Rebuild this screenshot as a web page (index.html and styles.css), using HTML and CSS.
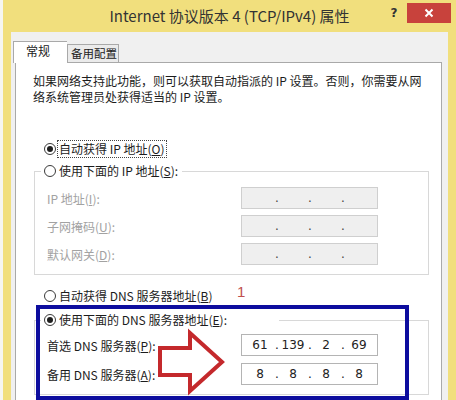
FILE: index.html
```html
<!DOCTYPE html>
<html lang="zh-CN">
<head>
<meta charset="utf-8">
<title>Internet 协议版本 4 (TCP/IPv4) 属性</title>
<link rel="stylesheet" href="styles.css">
</head>
<body>
<div class="frame">
  <div class="titlebar">
    <div class="title">Internet 协议版本 4 (TCP/IPv4) 属性</div>
    <div class="help">?</div>
    <div class="close">
      <svg width="10" height="10" viewBox="0 0 10 10"><path d="M1.5 1.5 L8.5 8.5 M8.5 1.5 L1.5 8.5" stroke="#fff" stroke-width="2"/></svg>
    </div>
  </div>
  <div class="client">
    <div class="tabs">
      <div class="tab active">常规</div>
      <div class="tab">备用配置</div>
    </div>
    <div class="panel">
      <p class="intro">如果网络支持此功能，则可以获取自动指派的 IP 设置。否则，你需要从网<br>络系统管理员处获得适当的 IP 设置。</p>

      <div class="radio-row first">
        <span class="radio checked"></span>
        <span class="label focus">自动获得 IP 地址(<u>O</u>)</span>
      </div>

      <fieldset class="group">
        <legend class="radio-row">
          <span class="radio"></span>
          <span class="label">使用下面的 IP 地址(<u>S</u>):</span>
        </legend>
        <div class="grid ip">
          <span class="field-label disabled">IP 地址(<u>I</u>):</span>
          <div class="ipbox disabled"><span></span><i>.</i><span></span><i>.</i><span></span><i>.</i><span></span></div>
          <span class="field-label disabled">子网掩码(<u>U</u>):</span>
          <div class="ipbox disabled"><span></span><i>.</i><span></span><i>.</i><span></span><i>.</i><span></span></div>
          <span class="field-label disabled">默认网关(<u>D</u>):</span>
          <div class="ipbox disabled"><span></span><i>.</i><span></span><i>.</i><span></span><i>.</i><span></span></div>
        </div>
      </fieldset>

      <div class="radio-row dns-auto">
        <span class="radio"></span>
        <span class="label">自动获得 DNS 服务器地址(<u>B</u>)</span>
      </div>

      <fieldset class="group dns">
        <legend class="radio-row">
          <span class="radio checked"></span>
          <span class="label">使用下面的 DNS 服务器地址(<u>E</u>):</span>
        </legend>
        <div class="grid dnsgrid">
          <span class="field-label">首选 DNS 服务器(<u>P</u>):</span>
          <div class="ipbox"><span>61</span><i>.</i><span>139</span><i>.</i><span>2</span><i>.</i><span>69</span></div>
          <span class="field-label">备用 DNS 服务器(<u>A</u>):</span>
          <div class="ipbox"><span>8</span><i>.</i><span>8</span><i>.</i><span>8</span><i>.</i><span>8</span></div>
        </div>
      </fieldset>
    </div>
  </div>
</div>

<div class="mark-num">1</div>
<div class="mark-box"></div>
<svg class="mark-arrow" width="72" height="68" viewBox="156 328 72 68">
  <path d="M160 348 L190 348 L190 333 L222 362 L190 391 L190 375 L160 375 Z" fill="none" stroke="#c4292c" stroke-width="4" stroke-linejoin="miter"/>
</svg>
</body>
</html>
```

FILE: styles.css
```css
* { box-sizing: border-box; }

html, body {
  margin: 0;
  padding: 0;
}

body {
  width: 456px;
  height: 400px;
  overflow: hidden;
  position: relative;
  background: #f6f6f2;
  font-family: "Noto Sans CJK SC", "Noto Sans", sans-serif;
  font-size: 12px;
  color: #1c1c1c;
}

.frame {
  margin-left: 3px;
  height: 400px;
  background: #f1df7d;
  display: flex;
  flex-direction: column;
}

.titlebar {
  height: 32px;
  flex: none;
  display: flex;
  align-items: flex-start;
}

.title {
  flex: 1;
  padding-left: 72px;
  text-align: center;
  font-size: 15px;
  line-height: 32px;
  color: #333;
  white-space: nowrap;
}

.help {
  width: 20px;
  margin-top: 4px;
  margin-right: 3px;
  font-family: "DejaVu Sans", sans-serif;
  font-weight: bold;
  font-size: 12px;
  line-height: 18px;
  text-align: center;
  color: #333;
}

.close {
  width: 44px;
  height: 20px;
  margin-top: 3px;
  margin-right: 5px;
  background: #c8423c;
  display: flex;
  align-items: center;
  justify-content: center;
}

.client {
  flex: 1;
  margin: 0 8px;
  background: #f0f0f0;
  padding: 9px 0 0 2px;
  display: flex;
  flex-direction: column;
  min-height: 0;
}

.tabs {
  display: flex;
  align-items: flex-end;
  height: 21px;
  position: relative;
  z-index: 1;
}

.tab {
  height: 18px;
  width: 52px;
  border: 1px solid #a9a9a9;
  border-bottom: none;
  background: #ebebeb;
  padding-left: 3px;
  line-height: 16px;
  font-size: 11.5px;
  white-space: nowrap;
  overflow: hidden;
  color: #222;
}

.tab.active {
  height: 22px;
  width: 54px;
  margin-bottom: -1px;
  background: #fff;
  padding-left: 12px;
  line-height: 18px;
  font-size: 12px;
  border-right: none;
}

.panel {
  flex: 1;
  margin-left: 2px;
  width: 427px;
  background: #fff;
  border: 1px solid #a9a9a9;
  border-bottom: none;
  padding: 10px 0 0 17px;
}

.intro {
  margin: 0;
  line-height: 16px;
  white-space: nowrap;
  color: #1c1c1c;
}

.radio-row {
  display: flex;
  align-items: center;
  height: 16px;
  line-height: 16px;
  white-space: nowrap;
}

.radio-row.first {
  margin-top: 36px;
  padding-left: 11px;
}

.radio {
  width: 12px;
  height: 12px;
  border-radius: 50%;
  border: 1px solid #3a3a3a;
  background: #fff;
  margin-right: 3px;
  flex: none;
  display: flex;
  align-items: center;
  justify-content: center;
}

.radio.checked::after {
  content: "";
  width: 6px;
  height: 6px;
  border-radius: 50%;
  background: #1e1e1e;
}

.label.focus {
  outline: 1px dotted #444;
  outline-offset: 0;
  padding: 0 1px;
  margin-left: -1px;
}

.group {
  margin: 6px 0 0 1px;
  width: 395px;
  border: 1px solid #d8d8d8;
  padding: 0 0 9px 6px;
}

.group legend {
  padding: 0 4px 0 3px;
  margin: 0;
}

.group.dns legend {
  padding-right: 52px;
}

.grid {
  display: grid;
  grid-template-columns: 194px 137px;
  grid-auto-rows: 22px;
  row-gap: 6px;
  padding: 8px 0 0 6px;
  align-items: center;
}

.dnsgrid {
  row-gap: 7px;
  padding-top: 6px;
}

.group.dns {
  margin-top: 8px;
  padding-bottom: 9px;
}

.field-label {
  white-space: nowrap;
}

.field-label.disabled {
  color: #a2a2a2;
}

.ipbox {
  height: 22px;
  border: 1px solid #b4b4b4;
  background: #fff;
  display: flex;
  align-items: center;
  padding: 0 3px;
  font-family: "DejaVu Sans", sans-serif;
  font-size: 12px;
  color: #222;
}

.ipbox.disabled {
  background: #efefef;
  border-color: #cfcfcf;
}

.ipbox span {
  flex: 1;
  text-align: center;
}

.ipbox i {
  font-style: normal;
  width: 3px;
  text-align: center;
}

.ipbox.disabled i {
  color: #444;
}

.radio-row.dns-auto {
  margin-top: 13px;
  padding-left: 11px;
}

.mark-num {
  position: absolute;
  left: 237px;
  top: 284px;
  font-family: "Liberation Sans", sans-serif;
  font-size: 15px;
  line-height: 16px;
  color: #c0504d;
}

.mark-box {
  position: absolute;
  left: 36px;
  top: 305px;
  width: 373px;
  height: 95px;
  border: 4px solid #0d0d9e;
}

.mark-arrow {
  position: absolute;
  left: 156px;
  top: 328px;
}
```
